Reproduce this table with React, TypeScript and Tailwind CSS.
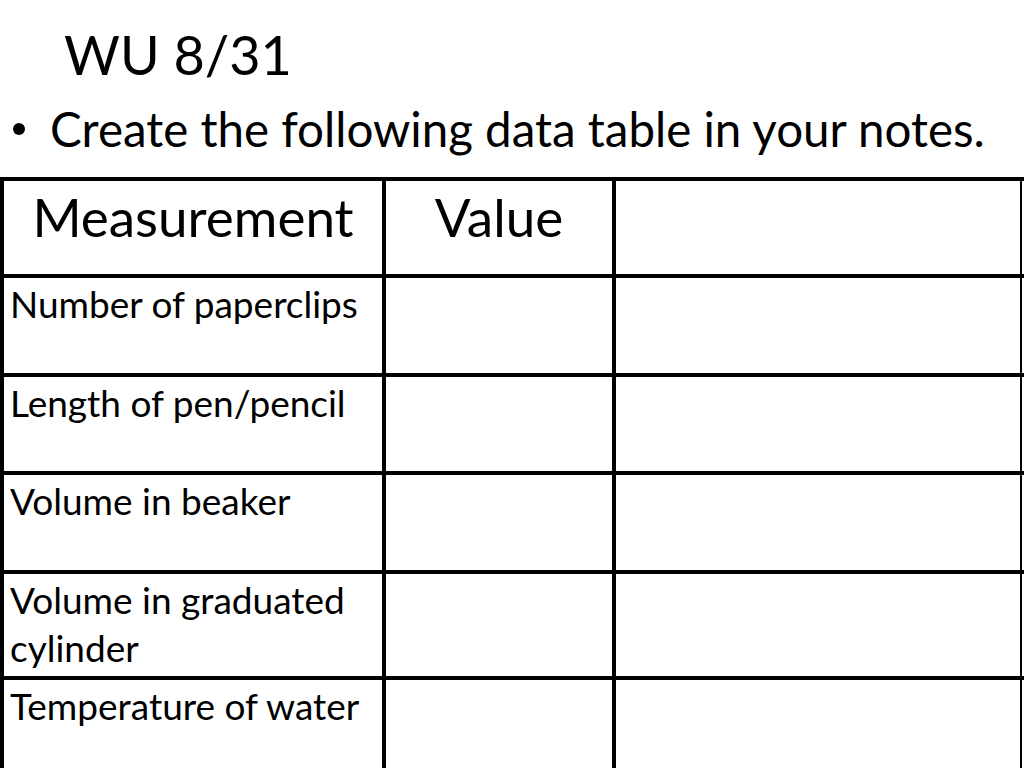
const rows = [
  { label: ["Number of paperclips"], h: "h-[99px]" },
  { label: ["Length of pen/pencil"], h: "h-[98px]" },
  { label: ["Volume in beaker"], h: "h-[99px]" },
  { label: ["Volume in graduated", "cylinder"], h: "h-[106px]" },
  { label: ["Temperature of water"], h: "h-[100px]" },
];

export default function App() {
  return (
    <div className="w-[1024px] h-[768px] overflow-hidden bg-white text-black font-['Lato',sans-serif]">
      <div className="h-[83px] pt-[25px] pl-[64px] text-[54px] leading-[60px]">WU 8/31</div>

      <div className="mt-[22px] flex items-center text-[47.5px] leading-[47px]">
        <span className="ml-[13px] mr-[25px] mt-[1px] w-[12px] h-[12px] rounded-full bg-black" />
        <span>Create the following data table in your notes.</span>
      </div>

      <div className="mt-[25px] border-t-4 border-l-4 border-black">
        <div className="flex h-[97px] border-b-4 border-black">
          <div className="w-[382px] border-r-4 border-black pt-[9px] text-center text-[53px] leading-[53px]">
            Measurement
          </div>
          <div className="w-[230px] border-r-4 border-black pt-[9px] text-center text-[53px] leading-[53px]">
            Value
          </div>
          <div className="w-[406px] border-r-2 border-black" />
        </div>

        {rows.map((r, i) => (
          <div key={i} className={`flex border-b-4 border-black ${r.h}`}>
            <div className="w-[382px] border-r-4 border-black pt-[2px] pl-[6px] text-[37px] leading-[48px]">
              {r.label.map((t) => (
                <div key={t}>{t}</div>
              ))}
            </div>
            <div className="w-[230px] border-r-4 border-black" />
            <div className="w-[406px] border-r-2 border-black" />
          </div>
        ))}
      </div>
    </div>
  );
}
